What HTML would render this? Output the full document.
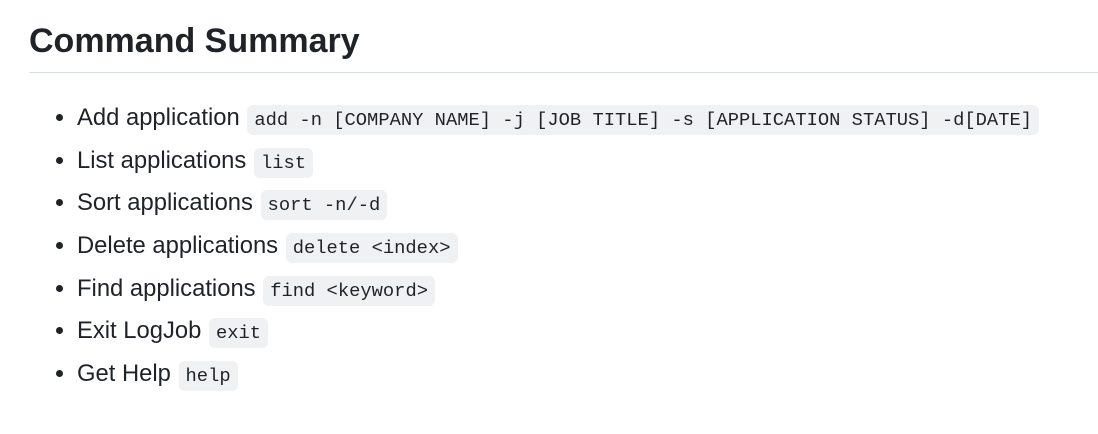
<!DOCTYPE html>
<html><head><style>
body{margin:0;background:#fff;width:1098px;height:434px;overflow:hidden;font-family:"Liberation Sans",sans-serif;color:#1f2328}
h2{position:absolute;left:29px;top:18px;margin:0;font-size:34px;font-weight:600;line-height:46px}
.rule{position:absolute;left:29px;top:72px;width:1069px;height:1px;background:#d8dee4}
ul{position:absolute;left:29px;top:97px;margin:0;padding-left:48px;font-size:23.8px;line-height:42.7px}
li{height:42.7px}
code{font-family:"Liberation Mono",monospace;font-size:18.8px;background:#eff1f3;border-radius:6px;padding:4px 7px;margin-left:1px;line-height:20px}
</style></head><body>
<h2>Command Summary</h2>
<div class="rule"></div>
<ul>
<li>Add application <code>add -n [COMPANY NAME] -j [JOB TITLE] -s [APPLICATION STATUS] -d[DATE]</code></li>
<li>List applications <code>list</code></li>
<li>Sort applications <code>sort -n/-d</code></li>
<li>Delete applications <code>delete &lt;index&gt;</code></li>
<li>Find applications <code>find &lt;keyword&gt;</code></li>
<li>Exit LogJob <code>exit</code></li>
<li>Get Help <code>help</code></li>
</ul>
</body></html>
